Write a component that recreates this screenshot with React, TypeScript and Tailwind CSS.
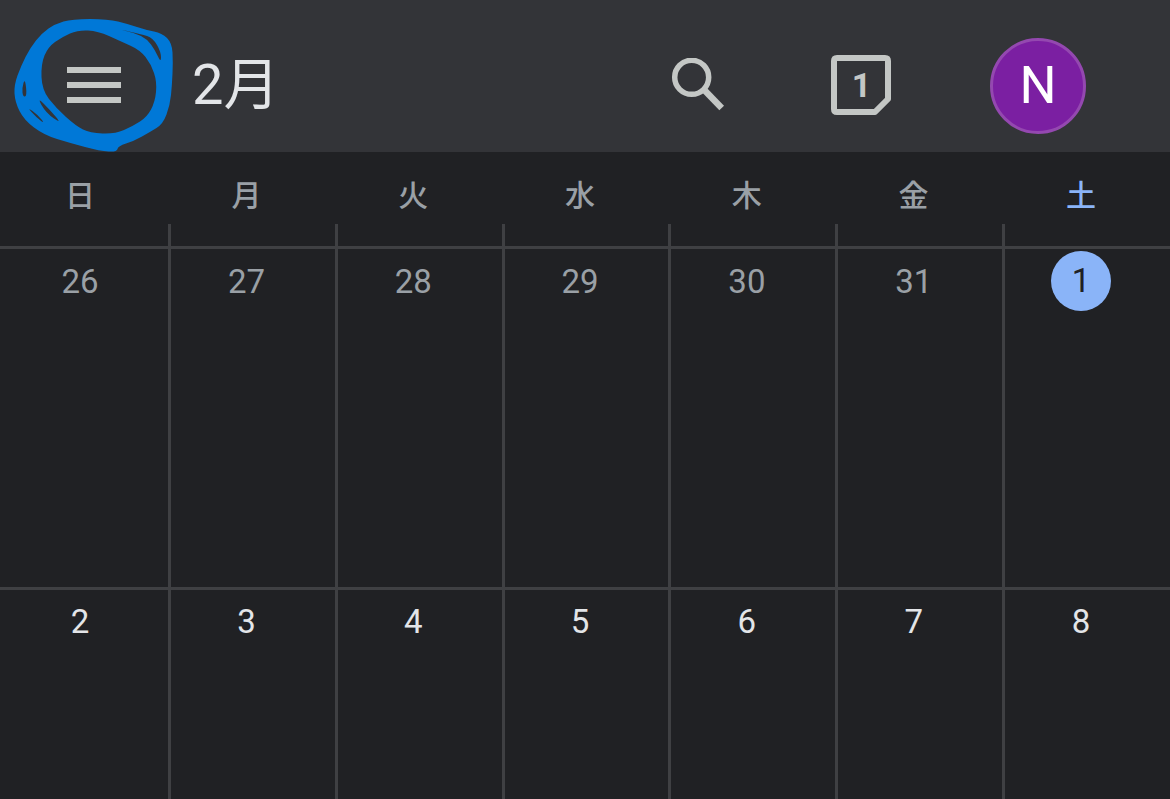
const sans = "font-['Roboto','Noto_Sans_CJK_JP',sans-serif]";

type P = [number, number];
function smooth(pts: P[]): string {
  const mid = (a: P, b: P): P => [(a[0] + b[0]) / 2, (a[1] + b[1]) / 2];
  const n = pts.length;
  const s = mid(pts[n - 1], pts[0]);
  let d = `M${s[0]} ${s[1]}`;
  for (let i = 0; i < n; i++) {
    const m = mid(pts[i], pts[(i + 1) % n]);
    d += `Q${pts[i][0]} ${pts[i][1]} ${m[0]} ${m[1]}`;
  }
  return d + "Z";
}

const outer: P[] = [[72, 19], [108, 19], [128, 24], [146, 30], [162, 33], [172, 43], [173, 62], [172, 85], [170, 105], [163, 124], [150, 132], [134, 141], [118, 146], [117, 152], [100, 151], [70, 143], [44, 135], [24, 120], [15, 102], [14, 85], [21, 66], [30, 48], [42, 33], [55, 24]];
const inner: P[] = [[78, 30], [98, 31], [120, 41], [140, 50], [151, 64], [157, 82], [155, 102], [147, 117], [133, 126], [115, 134], [90, 133], [76, 126], [56, 108], [42, 90], [41, 64], [48, 47], [62, 37]];
const gap1: P[] = [[117, 29], [135, 33], [147, 39], [155, 50], [161, 63], [161, 52], [153, 38], [141, 34]];
const gap2: P[] = [[25, 78], [27, 96], [23, 97], [22, 88]];
const gap3: P[] = [[27, 107], [36, 117], [45, 124], [38, 115]];
const gap4: P[] = [[37, 97], [46, 113], [62, 124], [50, 110]];

function Scribble() {
  return (
    <svg className="absolute left-0 top-0 pointer-events-none" width="180" height="156" viewBox="0 0 180 156">
      <path fill="#0078d7" fillRule="evenodd" d={[outer, inner, gap1, gap2, gap3, gap4].map(smooth).join("")} />
    </svg>
  );
}

const week = ["日", "月", "火", "水", "木", "金", "土"];
const row1 = ["26", "27", "28", "29", "30", "31", "1"];
const row2 = ["2", "3", "4", "5", "6", "7", "8"];
const cols = "grid grid-cols-[168px_repeat(5,166.8px)_1fr]";

function Row({ days, h, muted, top }: { days: string[]; h: string; muted?: boolean; top: string }) {
  return (
    <div className={`${cols} ${h}`}>
      {days.map((d, i) => (
        <div
          key={d}
          className={`flex justify-center pt-[2px] ${i === 0 ? "pr-2" : "border-l-[3px] border-[#3f4043] pr-[12.8px]"}`}
        >
          {d === "1" ? (
            <div className="w-[60px] h-[60px] rounded-full bg-[#8ab4f8] text-[#202124] text-[33px] flex items-center justify-center">
              {d}
            </div>
          ) : (
            <div className={`h-[60px] ${top} flex items-center text-[33px] ${muted ? "text-[#9aa0a6]" : "text-[#e3e5e8]"}`}>{d}</div>
          )}
        </div>
      ))}
    </div>
  );
}

export default function App() {
  return (
    <div className={`relative w-[1170px] h-[799px] overflow-hidden bg-[#202124] ${sans}`}>
      <header className="h-[152px] bg-[#333438] flex items-center pt-5">
        <svg className="ml-[67px] shrink-0 -mt-[2px]" width="54" height="36" viewBox="0 0 54 36" fill="#c4c7c5">
          <rect y="0" width="54" height="6" />
          <rect y="15" width="54" height="6" />
          <rect y="30" width="54" height="6" />
        </svg>
        <div className="ml-[71px] -mt-[2px] text-[#e3e5e8] text-[56px] leading-none">2月</div>
        <svg className="ml-auto shrink-0" width="56" height="56" viewBox="0 0 56 56" fill="none" stroke="#c4c7c5" strokeWidth="5.5">
          <circle cx="21.7" cy="19.3" r="17" />
          <path d="M35 32.7 L51.7 50" strokeWidth="6.5" />
        </svg>
        <div className="relative ml-[105px] -mt-[2px] w-[60px] h-[60px] shrink-0 flex items-center justify-center text-[#c4c7c5] text-[34px] font-bold">
          <svg className="absolute inset-0" width="60" height="60" viewBox="0 0 60 60" fill="none" stroke="#c4c7c5" strokeWidth="6" strokeLinejoin="round">
            <path d="M6 3 H54 Q57 3 57 6 V44 L44 57 H6 Q3 57 3 54 V6 Q3 3 6 3 Z" />
          </svg>
          <span className="relative pl-[1px]">1</span>
        </div>
        <div className="ml-[99px] mr-[84px] w-[96px] h-[96px] shrink-0 rounded-full bg-[#7b1fa2] border-[3px] border-[#9448b0] text-white text-[52px] flex items-center justify-center">
          N
        </div>
      </header>
      <div className={`${cols} h-[94px]`}>
        {week.map((w, i) => (
          <div key={w} className="flex flex-col">
            <div className={`h-[72px] pt-[14px] flex items-center justify-center text-[30px] font-medium ${i === 0 ? "pr-2" : "pr-[10px]"} ${i === 6 ? "text-[#8ab4f8]" : "text-[#9aa0a6]"}`}>
              {w}
            </div>
            <div className={`h-[22px] ${i === 0 ? "" : "border-l-[3px] border-[#3f4043]"}`} />
          </div>
        ))}
      </div>
      <div className="border-t-[3px] border-[#3f4043]">
        <Row days={row1} h="h-[338px]" muted top="pt-[2px]" />
      </div>
      <div className="border-t-[3px] border-[#3f4043]">
        <Row days={row2} h="h-[212px]" top="pt-0" />
      </div>
      <Scribble />
    </div>
  );
}
